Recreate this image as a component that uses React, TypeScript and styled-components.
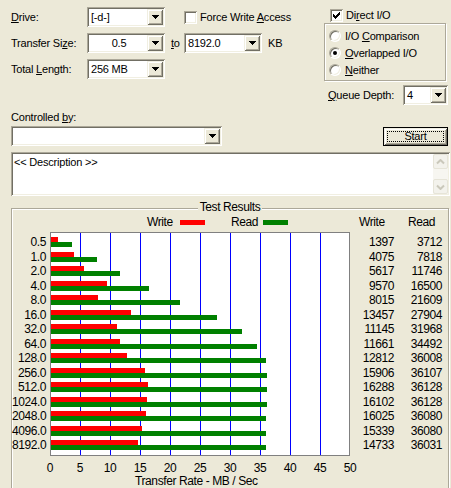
import React from "react"
import styled, { createGlobalStyle } from "styled-components"

const GlobalStyle = createGlobalStyle`
  html, body { margin: 0; padding: 0; background: #ece9d8; }
  body {
    font-family: "Liberation Sans", Arial, sans-serif;
    font-size: 11px;
    color: #000;
  }
`

const sunken = `
  box-shadow: inset 1px 1px #aca899, inset -1px -1px #fff,
    inset 2px 2px #716f64, inset -2px -2px #f1efe2;
`
const raised = `
  box-shadow: inset 1px 1px #f1efe2, inset -1px -1px #716f64,
    inset 2px 2px #fff, inset -2px -2px #aca899;
`

const rows: [string, number, number][] = [
  ["0.5", 1397, 3712],
  ["1.0", 4075, 7818],
  ["2.0", 5617, 11746],
  ["4.0", 9570, 16500],
  ["8.0", 8015, 21609],
  ["16.0", 13457, 27904],
  ["32.0", 11145, 31968],
  ["64.0", 11661, 34492],
  ["128.0", 12812, 36008],
  ["256.0", 15906, 36107],
  ["512.0", 16288, 36128],
  ["1024.0", 16102, 36128],
  ["2048.0", 16025, 36080],
  ["4096.0", 15339, 36080],
  ["8192.0", 14733, 36031],
]

const Window = styled.div`
  width: 451px;
  height: 488px;
  overflow: hidden;
  background: #ece9d8;
  letter-spacing: -0.2px;
`

const TopSection = styled.div`
  display: flex;
  height: 105px;
  padding: 7px 0 0 11px;
  box-sizing: border-box;
`

const LeftCol = styled.div`
  width: 313px;
  display: flex;
  flex-direction: column;
  gap: 6px;
`

const FieldRow = styled.div`
  display: flex;
  align-items: center;
  height: 20px;
`

const FieldLabel = styled.span<{ $w?: number }>`
  ${p => (p.$w ? `width: ${p.$w}px;` : "")}
  flex-shrink: 0;
  white-space: nowrap;
`

const U = styled.span`
  text-decoration: underline;
`

const Combo = styled.div<{ $w: number; $ml?: number }>`
  width: ${p => p.$w}px;
  margin-left: ${p => p.$ml || 0}px;
  height: 20px;
  flex-shrink: 0;
  box-sizing: border-box;
  padding: 2px;
  background: #fff;
  display: flex;
  align-items: center;
  ${sunken}
`

const ComboText = styled.span<{ $center?: boolean }>`
  flex: 1;
  padding-left: 2px;
  text-align: ${p => (p.$center ? "center" : "left")};
  white-space: nowrap;
`

const DropButton = styled.span`
  width: 16px;
  height: 16px;
  background: #ece9d8;
  display: flex;
  align-items: center;
  justify-content: center;
  ${raised}
`

const Arrow = () => (
  <svg width="7" height="4" viewBox="0 0 7 4" shapeRendering="crispEdges">
    <path d="M0 0h7v1H0z M1 1h5v1H1z M2 2h3v1H2z M3 3h1v1H3z" fill="#000" />
  </svg>
)

const ComboBox: React.FC<{ w: number; ml?: number; text?: string; center?: boolean }> = ({ w, ml, text, center }) => (
  <Combo $w={w} $ml={ml}>
    <ComboText $center={center}>{text}</ComboText>
    <DropButton>
      <Arrow />
    </DropButton>
  </Combo>
)

const Inline = styled.span<{ $ml?: number; $w?: number }>`
  margin-left: ${p => p.$ml || 0}px;
  ${p => (p.$w ? `width: ${p.$w}px;` : "")}
  flex-shrink: 0;
  white-space: nowrap;
`

const CheckRow = styled.label<{ $ml?: number }>`
  display: flex;
  align-items: center;
  gap: 3px;
  margin-left: ${p => p.$ml || 0}px;
  white-space: nowrap;
`

const CheckBoxBox = styled.span`
  width: 13px;
  height: 13px;
  box-sizing: border-box;
  background: #fff;
  display: flex;
  align-items: center;
  justify-content: center;
  ${sunken}
`

const CheckBox: React.FC<{ checked?: boolean }> = ({ checked }) => (
  <CheckBoxBox>
    {checked && (
      <svg width="7" height="7" viewBox="0 0 7 7" shapeRendering="crispEdges">
        <path
          d="M6 0h1v1H6z M5 1h2v1H5z M0 2h1v1H0z M4 2h3v1H4z M0 3h2v1H0z M3 3h3v1H3z M0 4h5v1H0z M1 5h3v1H1z M2 6h1v1H2z"
          fill="#000"
        />
      </svg>
    )}
  </CheckBoxBox>
)

const RightCol = styled.div`
  width: 127px;
  display: flex;
  flex-direction: column;
`

const DirectRow = styled.div`
  height: 16px;
  display: flex;
  align-items: center;
  padding-left: 6px;
`

const EtchedBox = styled.div`
  border: 1px solid #aca899;
  box-shadow: inset 1px 1px #fff, 1px 1px #fff;
  box-sizing: border-box;
`

const RadioGroup = styled(EtchedBox)`
  width: 122px;
  height: 58px;
  display: flex;
  flex-direction: column;
  padding: 3px 0 0 4px;
`

const RadioRow = styled.div`
  height: 17px;
  display: flex;
  align-items: center;
  gap: 4px;
  white-space: nowrap;
`

const RadioCircle = styled.span<{ $on?: boolean }>`
  width: 12px;
  height: 12px;
  border-radius: 50%;
  box-sizing: border-box;
  background: #fff;
  border: 1px solid;
  border-color: #aca899 #fff #fff #aca899;
  box-shadow: inset 1px 1px #716f64, inset -1px -1px #f1efe2;
  display: flex;
  align-items: center;
  justify-content: center;
  &::after {
    content: "";
    width: 4px;
    height: 4px;
    border-radius: 50%;
    background: ${p => (p.$on ? "#000" : "transparent")};
  }
`

const QueueRow = styled.div`
  margin-top: 4px;
  height: 20px;
  display: flex;
  align-items: center;
  padding-left: 4px;
`

const MidSection = styled.div`
  padding: 0 1px 0 11px;
`

const ControlLabel = styled.div`
  padding-top: 6px;
  line-height: 13px;
`

const ControlRow = styled.div`
  margin-top: 2px;
  height: 20px;
  display: flex;
  align-items: center;
`

const StartButton = styled.button`
  margin-left: auto;
  margin-right: 2px;
  width: 65px;
  height: 19px;
  padding: 3px;
  box-sizing: border-box;
  border: 1px solid #000;
  background: #ece9d8;
  font: inherit;
  letter-spacing: -0.2px;
  display: flex;
  ${raised}
`

const FocusRect = styled.span`
  flex: 1;
  border: 1px dotted #000;
  display: flex;
  align-items: center;
  justify-content: center;
  line-height: 9px;
`

const DescBox = styled.div`
  margin-top: 6px;
  height: 44px;
  width: 439px;
  padding: 2px;
  box-sizing: border-box;
  background: #fff;
  display: flex;
  ${sunken}
`

const DescText = styled.div`
  flex: 1;
  padding: 2px 1px;
  line-height: 13px;
`

const ScrollBar = styled.div`
  width: 15px;
  display: flex;
  flex-direction: column;
  background: #f7f6f1;
`

const ScrollBtn = styled.div`
  height: 15px;
  box-sizing: border-box;
  border: 1px solid #e6e4d8;
  border-radius: 2px;
  background: #f3f2ec;
  display: flex;
  align-items: center;
  justify-content: center;
`

const ScrollTrack = styled.div`
  flex: 1;
`

const Chevron: React.FC<{ down?: boolean }> = ({ down }) => (
  <svg width="9" height="6" viewBox="0 0 9 6">
    <path d={down ? "M1 1.5 L4.5 5 L8 1.5" : "M1 4.5 L4.5 1 L8 4.5"} stroke="#cac8bb" strokeWidth="2" fill="none" />
  </svg>
)

const ResultsBox = styled(EtchedBox)`
  margin: 12px 0 0 11px;
  width: 438px;
  height: 300px;
  font-size: 12px;
  letter-spacing: -0.4px;
`

const GroupTitle = styled.div`
  width: fit-content;
  margin: -9px auto 0;
  padding: 0 2px;
  background: #ece9d8;
  line-height: 14px;
`

const LegendRow = styled.div`
  margin-top: 1px;
  height: 14px;
  line-height: 14px;
  display: flex;
  align-items: center;
  padding-left: 135px;
`

const LegendLabel = styled.span<{ $w: number; $ml?: number }>`
  width: ${p => p.$w}px;
  margin-left: ${p => p.$ml || 0}px;
  flex-shrink: 0;
`

const Swatch = styled.span<{ $c: string }>`
  width: 25px;
  height: 5px;
  background: ${p => p.$c};
  flex-shrink: 0;
`

const ChartRow = styled.div`
  margin-top: 3px;
  display: flex;
`

const TextCol = styled.div<{ $w: number; $mr?: number }>`
  width: ${p => p.$w}px;
  margin-right: ${p => p.$mr || 0}px;
  padding-top: 3px;
  display: flex;
  flex-direction: column;
  text-align: right;
`

const TextCell = styled.div`
  height: 14.5px;
  line-height: 14.5px;
  white-space: nowrap;
`

const Plot = styled.div`
  width: 300px;
  height: 224px;
  box-sizing: border-box;
  border: 1px solid #808080;
  padding-top: 2px;
  display: flex;
  flex-direction: column;
  background-color: #fff;
  background-image: linear-gradient(to right, #0000ff 0 1px, transparent 1px);
  background-size: 30px 100%;
  background-position: 29px 0;
  background-repeat: repeat-x;
`

const BarRow = styled.div`
  height: 14.5px;
  display: flex;
  flex-direction: column;
  justify-content: center;
`

const Bar = styled.div<{ $c: string }>`
  height: 5px;
  background: ${p => p.$c};
`

const AxisRow = styled.div`
  margin: 6px 0 0 23px;
  height: 13px;
  line-height: 13px;
  display: flex;
`

const Tick = styled.span`
  width: 30px;
  text-align: center;
  flex-shrink: 0;
`

const AxisTitle = styled.div`
  margin-left: 123px;
  line-height: 13px;
  white-space: nowrap;
`

const px = (kb: number) => Math.max(0, (kb / 1000) * 6 - 1)

const App: React.FC = () => {
  return (
    <Window>
      <GlobalStyle />
      <TopSection>
        <LeftCol>
          <FieldRow>
            <FieldLabel $w={76}><U>D</U>rive:</FieldLabel>
            <ComboBox w={78} text="[-d-]" />
            <CheckRow $ml={19}>
              <CheckBox />
              <span>Force Write <U>A</U>ccess</span>
            </CheckRow>
          </FieldRow>
          <FieldRow>
            <FieldLabel $w={76}>Transfer Si<U>z</U>e:</FieldLabel>
            <ComboBox w={78} text="0.5" center />
            <Inline $ml={6} $w={13}><U>t</U>o</Inline>
            <ComboBox w={78} text="8192.0" />
            <Inline $ml={6}>KB</Inline>
          </FieldRow>
          <FieldRow>
            <FieldLabel $w={76}>Total <U>L</U>ength:</FieldLabel>
            <ComboBox w={78} text="256 MB" />
          </FieldRow>
        </LeftCol>
        <RightCol>
          <DirectRow>
            <CheckRow>
              <CheckBox checked />
              <span>Di<U>r</U>ect I/O</span>
            </CheckRow>
          </DirectRow>
          <RadioGroup>
            <RadioRow>
              <RadioCircle />
              <span>I/O <U>C</U>omparison</span>
            </RadioRow>
            <RadioRow>
              <RadioCircle $on />
              <span><U>O</U>verlapped I/O</span>
            </RadioRow>
            <RadioRow>
              <RadioCircle />
              <span><U>N</U>either</span>
            </RadioRow>
          </RadioGroup>
          <QueueRow>
            <FieldLabel $w={75}><U>Q</U>ueue Depth:</FieldLabel>
            <ComboBox w={45} text="4" />
          </QueueRow>
        </RightCol>
      </TopSection>

      <MidSection>
        <ControlLabel>Controlled <U>b</U>y:</ControlLabel>
        <ControlRow>
          <ComboBox w={211} />
          <StartButton>
            <FocusRect>Start</FocusRect>
          </StartButton>
        </ControlRow>
        <DescBox>
          <DescText>&lt;&lt; Description &gt;&gt;</DescText>
          <ScrollBar>
            <ScrollBtn><Chevron /></ScrollBtn>
            <ScrollTrack />
            <ScrollBtn><Chevron down /></ScrollBtn>
          </ScrollBar>
        </DescBox>
      </MidSection>

      <ResultsBox>
        <GroupTitle>Test Results</GroupTitle>
        <LegendRow>
          <LegendLabel $w={33}>Write</LegendLabel>
          <Swatch $c="#ff0000" />
          <LegendLabel $w={32} $ml={26}>Read</LegendLabel>
          <Swatch $c="#008000" />
          <LegendLabel $w={49} $ml={71}>Write</LegendLabel>
          <LegendLabel $w={40}>Read</LegendLabel>
        </LegendRow>
        <ChartRow>
          <TextCol $w={34} $mr={4}>
            {rows.map(r => (
              <TextCell key={r[0]}>{r[0]}</TextCell>
            ))}
          </TextCol>
          <Plot>
            {rows.map(r => (
              <BarRow key={r[0]}>
                <Bar $c="#ff0000" style={{ width: px(r[1]) }} />
                <Bar $c="#008000" style={{ width: px(r[2]) }} />
              </BarRow>
            ))}
          </Plot>
          <TextCol $w={44}>
            {rows.map(r => (
              <TextCell key={r[0]}>{r[1]}</TextCell>
            ))}
          </TextCol>
          <TextCol $w={48}>
            {rows.map(r => (
              <TextCell key={r[0]}>{r[2]}</TextCell>
            ))}
          </TextCol>
        </ChartRow>
        <AxisRow>
          {[0, 5, 10, 15, 20, 25, 30, 35, 40, 45, 50].map(t => (
            <Tick key={t}>{t}</Tick>
          ))}
        </AxisRow>
        <AxisTitle>Transfer Rate - MB / Sec</AxisTitle>
      </ResultsBox>
    </Window>
  )
}

export default App
